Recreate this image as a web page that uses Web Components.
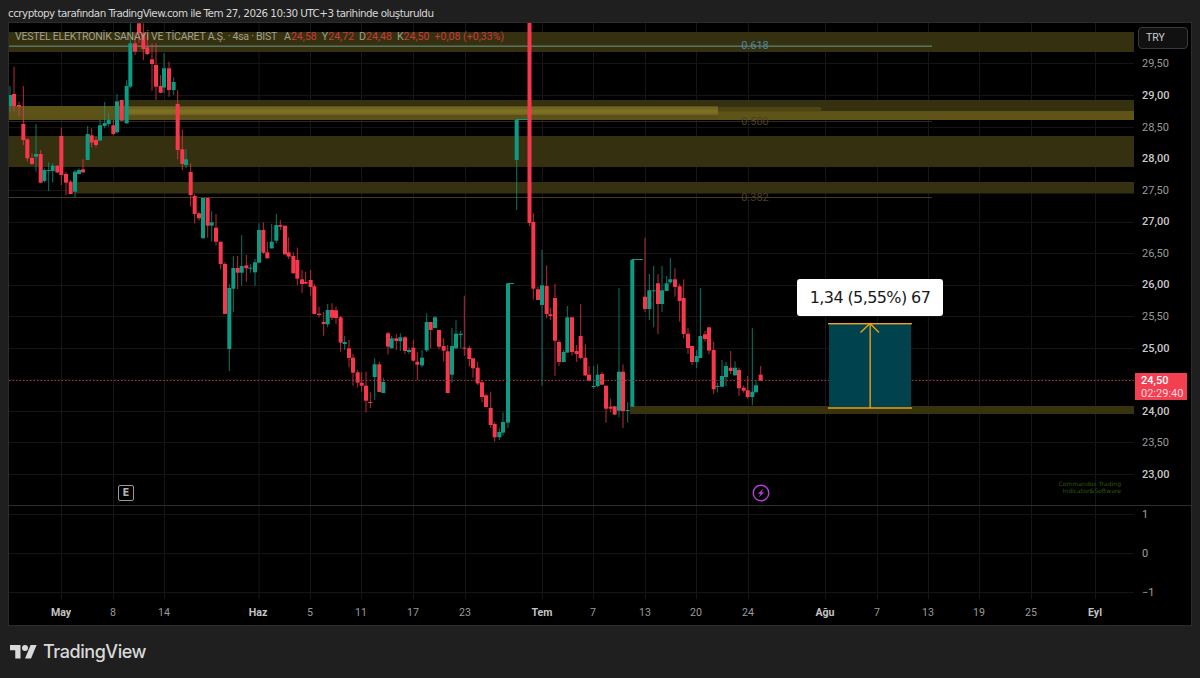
<!DOCTYPE html>
<html lang="tr"><head><meta charset="utf-8"><title>VESTEL</title>
<style>
html,body{margin:0;padding:0;background:#1f1f1f;height:678px;overflow:hidden}
body{font-family:Roboto,"Liberation Sans",sans-serif}
</style></head>
<body>
<tv-snapshot>
  <tv-header>ccryptopy tarafından TradingView.com ile Tem 27, 2026 10:30 UTC+3 tarihinde oluşturuldu</tv-header>
  <tv-chart>
    <tv-main-pane slot="main"></tv-main-pane>
    <tv-price-axis slot="axis"></tv-price-axis>
    <tv-lower-pane slot="lower"></tv-lower-pane>
    <tv-lower-axis slot="loweraxis"></tv-lower-axis>
    <tv-time-axis slot="time"></tv-time-axis>
  </tv-chart>
  <tv-brand></tv-brand>
</tv-snapshot>
<script>
const VX=[61,113,164,258.5,310,361,413,465,542,593,645,696,748,825,877,928,979,1031,1095];
const HY=[63,95,127,158,190,222,253,285,316,348,379.5,411,442,474];
const G=1,R=0;
const groups=[
 {ox:0,oy:0,c:[[30,258,285,318,335,G],[42,200,282,318,335,R],[57,305,315,320,348,R],[70,258,372,420,435,R],[82,415,418,475,485,R],[96,460,474,492,495,R],[108,372,462,470,515,G],[122,450,462,548,550,R],[133,505,510,543,548,G],[146,487,510,512,573,G],[158,490,497,513,548,G],[172,495,497,517,520,R],[184,383,408,525,555,R],[198,515,522,548,585,R],[212,540,545,582,582,R],[225,510,515,575,593,G],[237,505,510,522,522,G],[249,478,508,517,520,R],[263,378,402,480,480,G],[275,385,406,428,442,R],[288,410,420,435,442,R],[300,360,376,422,422,G],[314,306,369,378,385,G],[326,340,360,372,380,G],[340,360,376,402,405,R],[351,282,304,397,400,G],[365,300,300,362,362,R],[380,240,258,370,372,G],[391,70,130,260,265,G],[405,100,130,155,165,R],[417,70,70,100,130,R],[430,70,100,147,180,R],[442,100,142,162,165,R],[456,130,178,192,272,R],[468,130,195,260,300,R],[482,225,258,278,280,R],[492,160,205,263,280,G],[507,185,205,270,290,R],[521,232,246,270,285,G],[533,270,312,450,478,R],[547,388,448,492,510,R],[558,448,478,495,505,G],[572,490,516,585,620,R]]},
 {ox:0,oy:190,c:[[584,12,18,72,100,R],[597,65,70,85,92,R],[609,24,24,145,145,G],[623,24,24,107,143,R],[635,64,97,107,155,G],[648,72,113,155,167,R],[662,155,155,222,237,R],[675,216,222,372,372,R],[688,282,294,477,543,G],[700,198,234,296,366,G],[713,198,234,248,297,R],[725,136,228,248,287,G],[739,195,226,235,275,R],[751,222,233,236,248,G],[765,207,217,247,287,G],[777,100,120,218,220,G],[790,97,120,188,192,R],[802,155,187,205,205,R]]},
 {ox:260,oy:210,c:[[35,42,95,115,115,G],[49,12,45,92,100,G],[61,30,45,50,60,R],[75,47,47,133,133,R],[86,82,127,140,147,R],[100,127,138,190,190,R],[112,113,150,206,226,R],[126,180,208,222,248,R],[137,185,216,221,222,R],[152,180,210,231,257,R],[163,222,229,312,312,R],[177,290,311,315,322,R],[191,305,336,342,377,R],[203,282,300,343,352,G],[216,280,300,323,330,R],[228,290,301,324,342,R],[242,318,322,398,425,R],[254,378,396,402,420,G],[267,390,415,444,472,R],[279,432,443,488,527,R],[293,480,487,518,532,R],[305,487,518,527,545,R],[318,485,527,572,607,R],[331,547,576,579,594,R],[344,445,463,501,570,G],[358,455,463,546,546,R],[370,503,516,549,549,G],[384,365,370,410,433,R],[395,378,385,415,415,G],[409,372,385,393,420,R],[421,370,382,394,423,G],[435,378,382,423,432,R],[447,413,420,426,432,G],[460,390,413,452,455,R],[472,427,455,464,510,R],[486,420,443,466,472,G],[500,310,336,421,426,G],[512,336,336,360,415,R],[525,318,322,354,354,G],[537,360,360,410,418,R],[551,385,408,422,455,R],[563,405,424,549,549,R],[576,354,408,494,518,G],[588,331,371,415,415,G],[602,362,371,375,415,G],[613,257,413,416,438,R],[628,408,414,447,470,R],[639,445,445,475,503,R],[653,455,473,520,525,R],[666,510,517,561,577,R],[678,552,556,591,591,R],[692,545,594,645,653,R],[704,637,642,682,695,R],[718,655,666,682,690,G],[729,607,636,668,677,G],[744,220,220,638,654,G]]},
 {ox:510,oy:210,c:[[70,10,36,236,268,R],[84,230,238,270,270,R],[96,120,226,285,527,G],[110,166,228,312,325,R],[121,293,313,318,330,R],[135,222,264,392,498,R],[147,390,396,456,468,R],[161,420,426,456,456,G],[172,288,322,428,428,G],[186,322,322,426,437,R],[200,405,423,432,456,R],[212,282,378,444,448,R],[226,403,443,496,498,R],[237,468,494,512,512,R],[251,468,528,531,536,G],[263,463,494,528,533,G],[276,485,492,524,524,R],[288,527,527,596,638,R],[302,566,590,596,606,R],[314,589,589,614,616,R],[327,234,485,602,622,G],[339,463,485,603,654,R],[353,576,600,602,638,G],[367,149,149,590,590,G],[405,83,260,297,305,R],[418,192,241,297,330,G],[431,168,241,243,352,G],[444,192,220,282,372,R],[456,168,241,282,306,G],[470,198,220,243,243,G],[481,144,208,217,222,G],[495,175,208,231,260,R],[509,222,229,273,335,R],[521,208,264,372,385,R],[534,354,371,414,432,R],[546,408,408,456,465,R],[560,420,438,456,474,G],[571,234,378,444,444,G],[585,362,373,387,395,R],[597,352,352,422,433,R],[611,396,420,538,552,R],[622,518,528,531,547,G],[636,450,498,530,530,G],[648,455,468,501,528,G],[662,423,473,483,492,R],[675,454,473,496,496,G],[687,473,480,535,558,R],[701,527,533,542,548,R],[713,498,541,561,566,R],[727,354,545,561,586,G],[738,510,526,547,547,G],[752,468,494,512,512,R]]}
];
const RED='#f7374c',GREEN='#0b9c83';
function candlesSvg(){
  let s='';
  const one=(x,wt,bt,bb,wb,c)=>{
    const col=c?GREEN:RED;
    s+=`<rect x="${(x-.5).toFixed(2)}" y="${wt.toFixed(1)}" width="1" height="${(wb-wt).toFixed(1)}" fill="${col}" opacity=".75"/>`;
    s+=`<rect x="${(x-2).toFixed(2)}" y="${bt.toFixed(1)}" width="4" height="${Math.max(bb-bt,1).toFixed(1)}" fill="${col}"/>`;
  };
  groups.forEach(g=>g.c.forEach(d=>one(g.ox+d[0]/3,g.oy+d[1]/3,g.oy+d[2]/3,g.oy+d[3]/3,g.oy+d[4]/3,d[5])));
  one(516.7,120,120,160,210,G);
  one(529.5,23,23,223,226,R);
  s+=`<rect x="516" y="119" width="12" height="1" fill="${GREEN}"/><rect x="508" y="283" width="6" height="1" fill="${GREEN}"/><rect x="632" y="259" width="11" height="1" fill="${GREEN}"/>`;
  return s;
}
function gridSvg(ys,y1,y2){
  let s='';
  VX.forEach(x=>s+=`<rect x="${x}" y="${y1}" width="1" height="${y2-y1}" fill="#161616"/>`);
  ys.forEach(y=>s+=`<rect x="9" y="${y}" width="1125" height="1" fill="#141414"/>`);
  return s;
}
function zonesSvg(){
  const z=(x,y,w,h,f)=>`<rect x="${x}" y="${y}" width="${w}" height="${h}" fill="${f}"/>`;
  const D='#35300f';
  return z(9,32,1125,20,D)+
   z(128,100,1006,20,D)+z(9,106,119,14,D)+
   z(9,106,709,9,'#5c5319')+z(128,107,590,9,'#6f6420')+z(128,109.5,590,4,'#7d7024')+z(9,115,709,5,'#5a5018')+
   z(718,107,103,5,'#4d4515')+z(718,111.5,103,8.5,'#5f5418')+z(821,111,313,9,'#5f5418')+
   z(9,136,1125,31,D)+z(75,182,1059,11.5,D)+z(630,406,504,8,'#38320f');
}
function fibSvg(){
  return `<rect x="9" y="45.5" width="923" height="1.4" fill="#5c7a68"/>
  <rect x="9" y="121" width="923" height="1" fill="#33261a"/>
  <rect x="9" y="197" width="923" height="1" fill="#4a3a26"/>
  <g font-family="Roboto,sans-serif" font-size="11" text-anchor="middle">
  <text x="755" y="49" fill="#4a86a8">0.618</text>
  <text x="755" y="125" fill="#4a4020">0.500</text>
  <text x="755" y="201" fill="#4f3f26">0.382</text></g>`;
}
function measureSvg(){
  const O='#f5a30f';
  return `<rect x="829" y="323.5" width="82" height="84.5" fill="#00434f"/>
  <rect x="828" y="323" width="84" height="1.4" fill="${O}"/><rect x="828" y="407.3" width="84" height="1.4" fill="${O}"/>
  <rect x="869.5" y="324" width="1.3" height="84" fill="${O}"/>
  <path d="M860.5 332.5 L870 323.5 L879 332.5" fill="none" stroke="${O}" stroke-width="1.3"/>`;
}
function def(name,html,init){
  customElements.define(name,class extends HTMLElement{
    constructor(){super();const r=this.attachShadow({mode:'open'});
      const t=document.createElement('template');t.innerHTML=html;r.appendChild(t.content.cloneNode(true));
      if(init)init(r,this);}
  });
}
def('tv-snapshot',`<style>:host{display:flex;flex-direction:column;width:1200px;height:678px;background:#1f1f1f}</style><slot></slot>`);
def('tv-header',`<style>:host{display:block;height:22px;padding-left:8px;box-sizing:border-box;font:10.4px/27px "DejaVu Sans",sans-serif;color:#d6d6d6;white-space:nowrap;overflow:hidden;letter-spacing:-.55px}</style><slot></slot>`);
def('tv-chart',`<style>:host{display:block;margin:0 8px;width:1184px;height:604px;box-sizing:border-box;border:1px solid #2c2c2c;background:#000}
 .g{display:grid;grid-template-columns:1125px 57px;grid-template-rows:482px 94px 25px;height:602px}
 ::slotted([slot=lower]),::slotted([slot=loweraxis]){border-top:1px solid #2e2e2e}
 ::slotted([slot=time]){grid-column:1/3}
 </style><div class="g"><slot name="main"></slot><slot name="axis"></slot><slot name="lower"></slot><slot name="loweraxis"></slot><slot name="time"></slot></div>`);
def('tv-main-pane',`<style>:host{display:block;position:relative;overflow:hidden;width:1125px;height:482px}
 svg{display:block}
 .leg{position:absolute;left:6px;top:7px;font:10.6px/13px Roboto,sans-serif;color:#a0a090;white-space:nowrap}
 .leg i{font-style:normal;letter-spacing:-.28px;margin-right:7px}
 .leg b{font-weight:400;color:#c93a3e;margin-right:5px}
 .badge{position:absolute;left:109px;top:462px;width:16px;height:16px;box-sizing:border-box;border:1px solid #9a9a9a;border-radius:2px;color:#b0b0b0;font:bold 10px/14px "DejaVu Sans",sans-serif;text-align:center}
 .bolt{position:absolute;left:743px;top:461px;width:18px;height:18px}
 .measure{position:absolute;left:788px;top:256px;width:146px;height:37px;background:#fff;border-radius:3px;color:#1a1a1a;font:16px/37px "DejaVu Sans",sans-serif;text-align:center;white-space:nowrap;letter-spacing:-.6px}
 .wm{position:absolute;right:13px;top:457px;text-align:right;font:6px/7px "DejaVu Sans",sans-serif;letter-spacing:.05px;color:#2f5a10}
 </style>
 <svg width="1125" height="482" viewBox="9 23 1125 482" xmlns="http://www.w3.org/2000/svg"><g id="g"></g></svg>
 <div class="leg"><i>VESTEL ELEKTRONİK SANAYİ VE TİCARET A.Ş. · 4sa · BIST</i>A<b>24,58</b>Y<b>24,72</b>D<b>24,48</b>K<b>24,50</b><b>+0,08 (+0,33%)</b></div>
 <div class="badge">E</div>
 <svg class="bolt" viewBox="0 0 18 18"><circle cx="9" cy="9" r="7.8" fill="none" stroke="#b63fd0" stroke-width="1.4"/><path d="M11.5 4.5 L5.8 9.8 H8.6 L6.6 13.5 L12.3 8.2 H9.5 Z" fill="#b63fd0"/></svg>
 <div class="measure">1,34 (5,55%) 67</div>
 <div class="wm">Commandos Trading<br>Indicator&amp;Software</div>`,
 r=>{r.getElementById('g').innerHTML=gridSvg(HY,23,505)+zonesSvg()+fibSvg()+candlesSvg()+
   `<line x1="9" x2="1134" y1="380.5" y2="380.5" stroke="#b5303e" stroke-width="1" stroke-dasharray="1.5 2"/>`+measureSvg();});
def('tv-price-axis',`<style>:host{display:flex;flex-direction:column;position:relative;width:57px;height:482px;padding-top:4px;box-sizing:border-box;overflow:visible;background:#000}
 .try{margin-left:4px;width:50px;height:22px;box-sizing:border-box;border:1px solid #3a3a3a;border-radius:4px;background:#111;color:#ccc;font:10.5px/20px Roboto,sans-serif;padding-left:7px}
 .list{margin-top:-.7px}
 .p{height:31.6px;line-height:31.6px;padding-left:8px;font-family:Roboto,sans-serif;font-size:11px;color:#9a9a9a}
 .p.m{color:#c9c9c9;font-weight:500}
 .tag{position:absolute;left:1px;top:350px;width:52px;height:27px;background:#f23f52;color:#fff;font:11px/13px Roboto,sans-serif;padding:0 0 0 6px;box-sizing:border-box;display:flex;flex-direction:column;justify-content:center}
 .tag span{color:#ffd5da}
 .tag strong{font-weight:500}
 </style><div class="try">TRY</div><div class="list" id="l"></div>
 <div class="tag"><strong>24,50</strong><span>02:29:40</span></div>`,
 r=>{const v=['29,50','29,00','28,50','28,00','27,50','27,00','26,50','26,00','25,50','25,00','24,50','24,00','23,50','23,00'];
   r.getElementById('l').innerHTML=v.map(t=>`<div class="p${t.endsWith('00')?' m':''}">${t==='24,50'?'&nbsp;':t}</div>`).join('');});
def('tv-lower-pane',`<style>:host{display:block;width:1125px;height:94px;box-sizing:border-box;overflow:hidden}svg{display:block}</style>
 <svg width="1125" height="94" viewBox="9 506 1125 94" xmlns="http://www.w3.org/2000/svg"><g id="g"></g></svg>`,
 r=>{r.getElementById('g').innerHTML=gridSvg([514,553,592],506,600);});
def('tv-lower-axis',`<style>:host{display:flex;flex-direction:column;justify-content:center;width:57px;height:94px;padding-top:2px;box-sizing:border-box;overflow:visible}
 div{flex:none;height:39px;padding-left:8px;font:11px/39px Roboto,sans-serif;color:#a0a0a0}</style><div>1</div><div>0</div><div>−1</div>`);
def('tv-time-axis',`<style>:host{display:block;position:relative;height:25px}
 span{position:absolute;top:7px;transform:translateX(-50%);font:10.6px/14px Roboto,sans-serif;color:#9a9a9a}
 span.m{color:#c4c4c4;font-weight:700}</style><div id="t"></div>`,
 r=>{const v=[['May',61,1],['8',113],['14',164],['Haz',258,1],['5',310],['11',361],['17',413],['23',465],['Tem',542,1],['7',593],['13',645],['20',696],['24',748],['Ağu',825,1],['7',877],['13',928],['19',979],['25',1031],['Eyl',1095,1]];
   r.getElementById('t').innerHTML=v.map(a=>`<span class="${a[2]?'m':''}" style="left:${a[1]-9}px">${a[0]}</span>`).join('');});
def('tv-brand',`<style>:host{display:flex;align-items:center;gap:6px;height:52px;padding-left:10px;box-sizing:border-box;color:#d9d9d9}
 svg{width:27px;height:21px;flex:none}span{font:500 18px/24px Inter,"Open Sans",sans-serif;letter-spacing:-.45px}</style>
 <svg viewBox="0 0 36 28"><path fill="#d9d9d9" d="M14 22H7V11H0V4h14v18zM28 22h-8l7.5-18h8L28 22z"/><circle cx="20" cy="8" r="4" fill="#d9d9d9"/></svg><span>TradingView</span>`);
</script>
</body></html>
